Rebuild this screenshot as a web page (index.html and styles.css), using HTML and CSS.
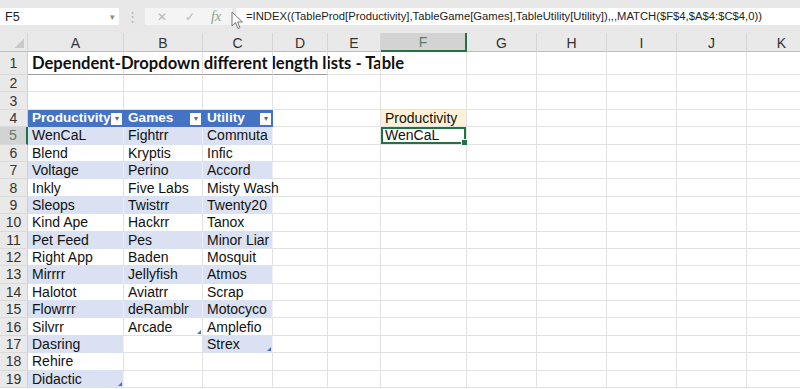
FILE: index.html
```html
<!DOCTYPE html>
<html lang="en">
<head>
    <meta charset="UTF-8">
    <title>Dependent-Dropdown - Table</title>
    <link rel="stylesheet" href="styles.css">
</head>
<body>
    <div class="toolbar">
        <div class="namebox"><span>F5</span><span class="caret">&#9662;</span></div>
        <div class="sep">&#8942;</div>
        <div class="fbtns">
            <span class="fb">&#10005;</span>
            <span class="fb">&#10003;</span>
            <span class="fx">fx</span>
        </div>
        <div class="formula">=INDEX((TableProd[Productivity],TableGame[Games],TableUtility[Utility]),,,MATCH($F$4,$A$4:$C$4,0))</div>
        <svg class="cursor" width="13" height="19" viewBox="0 0 13 19">
            <path d="M1 1 L1 15 L4.5 11.5 L7 17.5 L9 16.6 L6.6 11 L11.5 11 Z" fill="#fff" stroke="#777" stroke-width="1"/>
        </svg>
    </div>

    <table class="sheet">
        <colgroup>
            <col class="c-rh"><col class="c-a"><col class="c-b"><col class="c-c"><col class="c-d"><col class="c-e">
            <col class="c-f"><col class="c-g"><col class="c-g"><col class="c-g"><col class="c-g"><col class="c-g">
        </colgroup>
        <tr class="colhead">
            <th class="corner"></th><th>A</th><th>B</th><th>C</th><th>D</th><th>E</th>
            <th class="active">F</th><th>G</th><th>H</th><th>I</th><th>J</th><th>K</th>
        </tr>
        <tr class="r-title">
            <th>1</th><td class="title line">Dependent-Dropdown different length lists - Table</td><td class="line"></td><td class="line"></td><td class="line"></td><td></td>
            <td></td><td></td><td></td><td></td><td></td><td></td>
        </tr>
        <tr><th>2</th><td></td><td></td><td></td><td></td><td></td><td></td><td></td><td></td><td></td><td></td><td></td></tr>
        <tr><th>3</th><td></td><td></td><td></td><td></td><td></td><td></td><td></td><td></td><td></td><td></td><td></td></tr>
        <tr>
            <th>4</th>
            <td class="hd">Productivity<span class="dd">&#9662;</span></td>
            <td class="hd">Games<span class="dd">&#9662;</span></td>
            <td class="hd">Utility<span class="dd">&#9662;</span></td>
            <td></td><td></td><td class="input">Productivity</td><td></td><td></td><td></td><td></td><td></td>
        </tr>
        <tr class="band">
            <th class="active">5</th><td class="t">WenCaL</td><td class="t">Fightrr</td><td class="t">Commuta</td>
            <td></td><td></td><td class="sel">WenCaL</td><td></td><td></td><td></td><td></td><td></td>
        </tr>
        <tr><th>6</th><td class="t">Blend</td><td class="t">Kryptis</td><td class="t">Infic</td><td></td><td></td><td></td><td></td><td></td><td></td><td></td><td></td></tr>
        <tr class="band"><th>7</th><td class="t">Voltage</td><td class="t">Perino</td><td class="t">Accord</td><td></td><td></td><td></td><td></td><td></td><td></td><td></td><td></td></tr>
        <tr><th>8</th><td class="t">Inkly</td><td class="t">Five Labs</td><td class="t">Misty Wash</td><td></td><td></td><td></td><td></td><td></td><td></td><td></td><td></td></tr>
        <tr class="band"><th>9</th><td class="t">Sleops</td><td class="t">Twistrr</td><td class="t">Twenty20</td><td></td><td></td><td></td><td></td><td></td><td></td><td></td><td></td></tr>
        <tr><th>10</th><td class="t">Kind Ape</td><td class="t">Hackrr</td><td class="t">Tanox</td><td></td><td></td><td></td><td></td><td></td><td></td><td></td><td></td></tr>
        <tr class="band"><th>11</th><td class="t">Pet Feed</td><td class="t">Pes</td><td class="t">Minor Liar</td><td></td><td></td><td></td><td></td><td></td><td></td><td></td><td></td></tr>
        <tr><th>12</th><td class="t">Right App</td><td class="t">Baden</td><td class="t">Mosquit</td><td></td><td></td><td></td><td></td><td></td><td></td><td></td><td></td></tr>
        <tr class="band"><th>13</th><td class="t">Mirrrr</td><td class="t">Jellyfish</td><td class="t">Atmos</td><td></td><td></td><td></td><td></td><td></td><td></td><td></td><td></td></tr>
        <tr><th>14</th><td class="t">Halotot</td><td class="t">Aviatrr</td><td class="t">Scrap</td><td></td><td></td><td></td><td></td><td></td><td></td><td></td><td></td></tr>
        <tr class="band"><th>15</th><td class="t">Flowrrr</td><td class="t">deRamblr</td><td class="t">Motocyco</td><td></td><td></td><td></td><td></td><td></td><td></td><td></td><td></td></tr>
        <tr><th>16</th><td class="t">Silvrr</td><td class="t end">Arcade</td><td class="t">Amplefio</td><td></td><td></td><td></td><td></td><td></td><td></td><td></td><td></td></tr>
        <tr class="band"><th>17</th><td class="t">Dasring</td><td></td><td class="t end">Strex</td><td></td><td></td><td></td><td></td><td></td><td></td><td></td><td></td></tr>
        <tr><th>18</th><td class="t">Rehire</td><td></td><td></td><td></td><td></td><td></td><td></td><td></td><td></td><td></td><td></td></tr>
        <tr class="band"><th>19</th><td class="t end">Didactic</td><td></td><td></td><td></td><td></td><td></td><td></td><td></td><td></td><td></td><td></td></tr>
    </table>
</body>
</html>
```

FILE: styles.css
```css
* {
    margin: 0;
    padding: 0;
    box-sizing: border-box;
}

body {
    width: 800px;
    height: 389px;
    overflow: hidden;
    background: #fff;
    font-family: "Liberation Sans", Arial, sans-serif;
    color: #111;
}

/* Formula bar */
.toolbar {
    position: relative;
    height: 33px;
    background: #e8e8e8;
    display: flex;
    align-items: center;
}

.namebox {
    width: 119px;
    height: 17px;
    background: #fff;
    display: flex;
    align-items: center;
    justify-content: space-between;
    padding: 0 4px 0 5px;
    font-size: 12.5px;
    color: #222;
}

.namebox .caret {
    font-size: 9px;
    color: #888;
}

.sep {
    width: 26px;
    text-align: center;
    color: #b5b5b5;
    font-size: 13px;
}

.fbtns {
    width: 87px;
    height: 17px;
    background: #f4f4f4;
    display: flex;
    align-items: center;
    padding-left: 10px;
    gap: 14px;
}

.fbtns .fb {
    color: #b8b8b8;
    font-size: 12px;
    width: 14px;
    text-align: center;
}

.fbtns .fx {
    font-family: "Liberation Serif", serif;
    font-style: italic;
    color: #8aa08e;
    font-size: 14px;
}

.formula {
    flex: 1;
    height: 17px;
    margin-left: 4px;
    background: #fff;
    padding-left: 10px;
    font-size: 11.25px;
    line-height: 17px;
    color: #222;
    white-space: nowrap;
    overflow: hidden;
}

.cursor {
    position: absolute;
    left: 231px;
    top: 11px;
}

/* Sheet grid */
.sheet {
    width: 816px;
    table-layout: fixed;
    border-collapse: separate;
    border-spacing: 0;
    font-size: 14px;
}

.c-rh { width: 28px; }
.c-a { width: 96px; }
.c-b { width: 79px; }
.c-c { width: 70px; }
.c-d { width: 55px; }
.c-e { width: 53px; }
.c-f { width: 86px; }
.c-g { width: 70px; }

.sheet tr {
    height: 17.4px;
}

.sheet td {
    padding: 0 0 0 4px;
    border-right: 1px solid #e2e2e2;
    border-bottom: 1px solid #e2e2e2;
    white-space: nowrap;
    overflow: visible;
    line-height: 16px;
    vertical-align: middle;
    position: relative;
}

.sheet th {
    background: #e9e9e9;
    color: #333;
    font-weight: normal;
    border-right: 1px solid #cfcfcf;
    border-bottom: 1px solid #dadada;
    text-align: center;
    line-height: 16px;
}

.sheet tr.colhead {
    height: 18px;
}

.colhead th {
    border-right: 1px solid #d6d6d6;
    border-bottom: 1px solid #bdbdbd;
    padding-top: 1px;
}

.colhead th.active {
    background: #d3d3d3;
    border-bottom: 2px solid #217346;
}

.colhead .corner {
    background: #e9e9e9 linear-gradient(135deg, transparent 62%, #c9c9c9 62%) no-repeat right 3px bottom 3px / 12px 12px;
}

.sheet tr > th.active {
    background: #d3d3d3;
    color: #5a7f69;
    border-right: 2px solid #217346;
}

/* Title row */
.sheet tr.r-title {
    height: 23px;
}

.title {
    font-family: Lato, "Liberation Sans", sans-serif;
    font-weight: 700;
    font-size: 16.6px;
    color: #111;
}

.sheet td.line {
    border-bottom: 1px solid #9d9d9d;
}

/* Table styles */
.sheet td.hd {
    background: #4472c4;
    color: #fff;
    font-weight: bold;
    font-size: 13.6px;
    border-right-color: #4472c4;
    border-bottom-color: #4472c4;
}

.dd {
    position: absolute;
    right: 1px;
    top: 3px;
    width: 11px;
    height: 12px;
    background: #fff;
    color: #666;
    font-size: 8px;
    font-weight: normal;
    line-height: 12px;
    text-align: center;
}

.band td.t {
    background: #d9e1f2;
    border-right-color: #edf0f8;
    border-bottom-color: #d9e1f2;
}

.sheet td.t {
    border-bottom-color: #d9e1f2;
}

.sheet td.end::after {
    content: "";
    position: absolute;
    right: 1px;
    bottom: 1px;
    width: 0;
    height: 0;
    border-left: 4px solid transparent;
    border-bottom: 4px solid #4472c4;
}

.sheet td.input {
    background: #fcf2d3;
}

.sheet td.sel {
    box-shadow: inset 0 0 0 2px #217346;
}

.sheet td.sel::after {
    content: "";
    position: absolute;
    right: -2px;
    bottom: -2px;
    width: 5px;
    height: 5px;
    background: #217346;
    border: 1px solid #fff;
}
```
